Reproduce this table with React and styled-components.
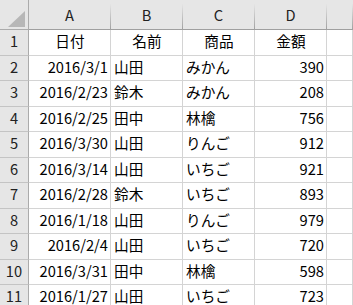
import React from "react";
import styled, { createGlobalStyle } from "styled-components";

const GlobalStyle = createGlobalStyle`
  html, body {
    margin: 0;
    padding: 0;
    background: #ffffff;
  }
  body {
    font-family: "Noto Sans CJK JP", "Noto Sans", sans-serif;
    overflow: hidden;
  }
`;

const Sheet = styled.div`
  display: grid;
  grid-template-columns: 29px 82px 72px 72px 72px 1fr;
  grid-template-rows: 30px repeat(11, 25.5px);
  width: 353px;
  height: 305px;
  overflow: hidden;
  font-size: 14.67px;
  line-height: 1;
  color: #000;
`;

const Corner = styled.div`
  position: relative;
  background: #e6e6e6;
  border-right: 1px solid #ababab;
  border-bottom: 1px solid #ababab;
  box-sizing: border-box;
`;

const CornerMark = styled.svg`
  position: absolute;
  left: 8px;
  top: 11px;
`;

const ColHead = styled.div`
  display: flex;
  align-items: center;
  justify-content: center;
  background: #e6e6e6;
  border-bottom: 1px solid #ababab;
  box-sizing: border-box;
  padding-top: 2px;
  color: #222;
  border-right: 1px solid;
  border-image: linear-gradient(to bottom, #e6e6e6 15%, #9e9e9e) 1;
  border-left: none;
  border-top: none;
`;

const RowHead = styled.div`
  display: flex;
  align-items: center;
  justify-content: center;
  background: #e6e6e6;
  border-right: 1px solid #ababab;
  border-bottom: 1px solid #c4c4c4;
  box-sizing: border-box;
  padding-bottom: 1px;
  color: #222;
`;

const Cell = styled.div`
  display: flex;
  align-items: center;
  justify-content: ${(p) =>
    p.$align === "right" ? "flex-end" : p.$align === "center" ? "center" : "flex-start"};
  padding: 0 2px 1px 3px;
  border-right: 1px solid #d4d4d4;
  border-bottom: 1px solid #d4d4d4;
  box-sizing: border-box;
  white-space: nowrap;
  overflow: hidden;
`;

const columns = ["A", "B", "C", "D", "E"];

const rows = [
  ["2016/3/1", "山田", "みかん", "390"],
  ["2016/2/23", "鈴木", "みかん", "208"],
  ["2016/2/25", "田中", "林檎", "756"],
  ["2016/3/30", "山田", "りんご", "912"],
  ["2016/3/14", "山田", "いちご", "921"],
  ["2016/2/28", "鈴木", "いちご", "893"],
  ["2016/1/18", "山田", "りんご", "979"],
  ["2016/2/4", "山田", "いちご", "720"],
  ["2016/3/31", "田中", "林檎", "598"],
  ["2016/1/27", "山田", "いちご", "723"],
];

const headers = ["日付", "名前", "商品", "金額"];

const App = () => {
  return (
    <>
      <GlobalStyle />
      <Sheet>
        <Corner>
          <CornerMark width="17" height="16" viewBox="0 0 17 16">
            <polygon points="0,16 17,16 17,0" fill="#b7b7b7" />
          </CornerMark>
        </Corner>
        {columns.map((c) => (
          <ColHead key={c}>{c === "E" ? "" : c}</ColHead>
        ))}

        <RowHead>1</RowHead>
        {headers.map((h) => (
          <Cell key={h} $align="center">
            {h}
          </Cell>
        ))}
        <Cell />

        {rows.map((r, i) => (
          <React.Fragment key={i}>
            <RowHead>{i + 2}</RowHead>
            <Cell $align="right">{r[0]}</Cell>
            <Cell>{r[1]}</Cell>
            <Cell>{r[2]}</Cell>
            <Cell $align="right">{r[3]}</Cell>
            <Cell />
          </React.Fragment>
        ))}
      </Sheet>
    </>
  );
};

export default App;
